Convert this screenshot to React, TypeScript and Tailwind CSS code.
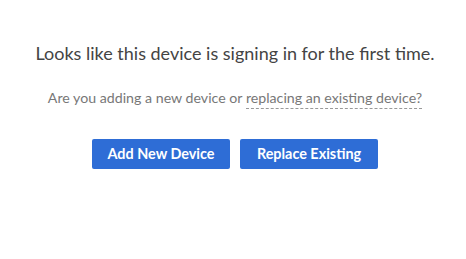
import React from "react";

export default function App() {
  return (
    <div className="w-[466px] h-[259px] bg-white flex flex-col items-center pt-[41px] pl-[4px] font-['Lato','Open_Sans',sans-serif]">
      <h1 className="text-[18px] leading-[24px] text-[#444]">
        Looks like this device is signing in for the first time.
      </h1>
      <p className="mt-[24px] text-[14.2px] leading-[18px] text-[#777]">
        Are you adding a new device or{" "}
        <span className="pb-[2px] border-b border-dashed border-[#999]">replacing an existing device?</span>
      </p>
      <div className="mt-[32px] flex gap-[10px]">
        <button className="w-[138px] h-[30px] rounded-[2px] bg-[#2e6dd6] text-white text-[14.4px] font-bold">
          Add New Device
        </button>
        <button className="w-[138px] h-[30px] rounded-[2px] bg-[#2e6dd6] text-white text-[14.4px] font-bold">
          Replace Existing
        </button>
      </div>
    </div>
  );
}
